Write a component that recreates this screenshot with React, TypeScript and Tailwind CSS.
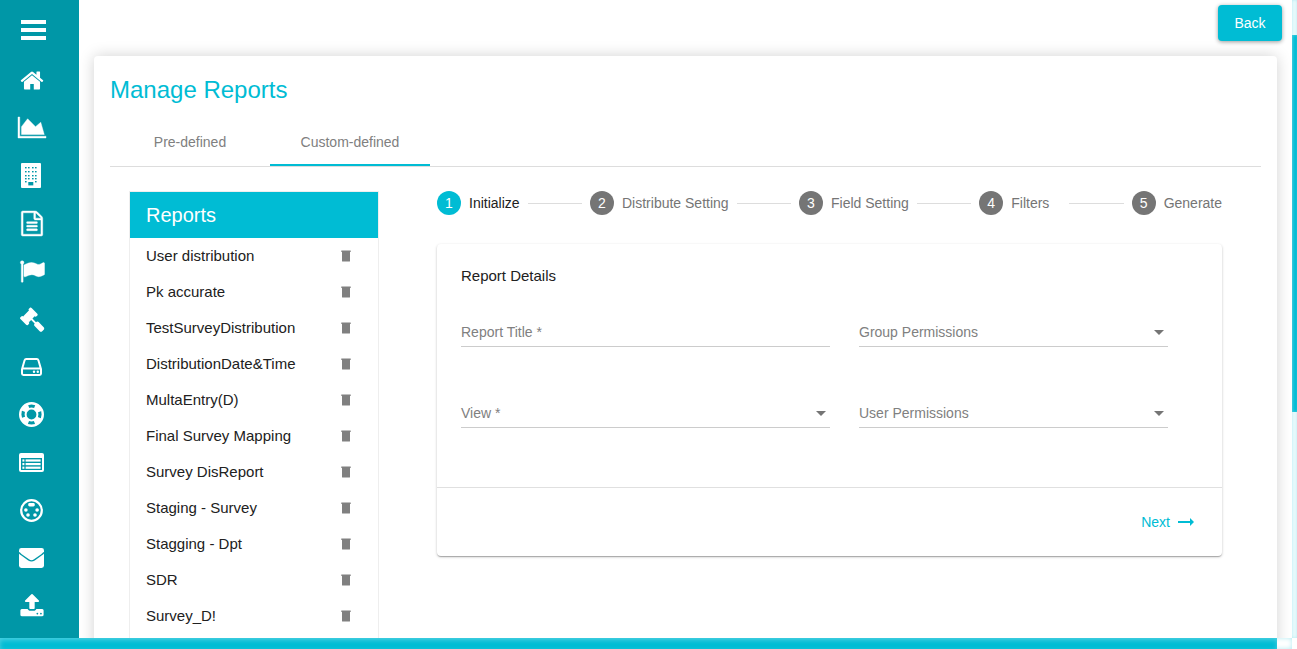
import { useState } from 'react';
import type { ReactNode } from 'react';

type NavItem = {
  label: string;
  icon: ReactNode;
};

type GlyphProps = {
  d: string;
  viewBox?: string;
  strokeWidth?: number;
};

type FieldProps = {
  id: string;
  label: string;
};

type SelectFieldProps = FieldProps & {
  options: string[];
};

const Glyph = ({ d, viewBox = '0 0 1792 1792', strokeWidth = 0 }: GlyphProps) => (
  <svg
    aria-hidden="true"
    className="h-[25px] w-7 overflow-visible"
    fill="currentColor"
    fillRule="evenodd"
    stroke="currentColor"
    strokeWidth={strokeWidth}
    viewBox={viewBox}
  >
    <path d={d} />
  </svg>
);

const BuildingIcon = () => (
  <svg aria-hidden="true" className="mr-0.5 h-[25px] w-5" viewBox="0 0 20 25">
    <rect fill="currentColor" height="25" rx="1" width="20" />
    <g className="fill-[#0097a7]">
      {[4, 8, 12, 15].map((y) =>
        [4, 7, 11, 14].map((x) => <rect height="1.4" key={`${x}-${y}`} width="1.6" x={x} y={y} />),
      )}
      <rect height="1.4" width="1.6" x="4" y="18" />
      <rect height="1.4" width="1.6" x="14" y="18" />
      <rect height="3.4" width="5" x="7.3" y="19" />
    </g>
  </svg>
);

const DriveIcon = () => (
  <svg aria-hidden="true" className="h-[18px] w-[21px]" viewBox="0 0 21 18">
    <path
      d="M1 11.2 3.6 2.2Q4 1 5.2 1h10.6q1.2 0 1.6 1.2L20 11.2V15.6q0 1.4-1.4 1.4H2.4Q1 17 1 15.6ZM1 10.4h19"
      fill="none"
      stroke="currentColor"
      strokeWidth="2"
    />
    <circle cx="13" cy="13.7" fill="currentColor" r="1.2" />
    <circle cx="16.8" cy="13.7" fill="currentColor" r="1.2" />
  </svg>
);

const LifeRingIcon = () => (
  <svg aria-hidden="true" className="h-[25px] w-[25px]" fill="none" stroke="currentColor" viewBox="0 0 25 25">
    <circle cx="12.5" cy="12.5" r="11.3" strokeWidth="2.4" />
    <circle cx="12.5" cy="12.5" r="5.9" strokeWidth="2" />
    <circle
      cx="12.5"
      cy="12.5"
      r="8.4"
      strokeDasharray="7.2 5.995"
      strokeDashoffset="3.6"
      strokeWidth="4.6"
      transform="rotate(45 12.5 12.5)"
    />
  </svg>
);

const ListIcon = () => (
  <svg aria-hidden="true" className="h-[19px] w-[25px]" viewBox="0 0 25 19">
    <rect fill="currentColor" height="19" rx="2" width="25" />
    <rect className="fill-[#0097a7]" height="12" width="21" x="2" y="5" />
    <g fill="currentColor">
      {[6.4, 10, 13.6].map((y) => (
        <g key={y}>
          <rect height="2.2" width="2" x="3.4" y={y} />
          <rect height="2.2" width="15" x="6.6" y={y} />
        </g>
      ))}
    </g>
  </svg>
);

const SocketIcon = () => (
  <svg aria-hidden="true" className="size-[23px]" fill="currentColor" viewBox="0 0 23 23">
    <circle cx="11.5" cy="11.5" fill="none" r="10.3" stroke="currentColor" strokeWidth="2.2" />
    <rect height="3.4" rx="1.4" width="6.6" x="8.2" y="4" />
    <circle cx="5.9" cy="11" r="1.8" />
    <circle cx="17.1" cy="11" r="1.8" />
    <circle cx="8" cy="16" r="1.8" />
    <circle cx="15" cy="16" r="1.8" />
  </svg>
);

const EnvelopeIcon = () => (
  <svg aria-hidden="true" className="h-5 w-[25px]" viewBox="0 0 25 20">
    <rect fill="currentColor" height="20" rx="2.4" width="25" />
    <path
      className="stroke-[#0097a7]"
      d="M0 4.4q.8 1.2 2.4 2.3l7.2 5.2q2.9 2 5.8 0l7.2-5.2q1.6-1.1 2.4-2.3"
      fill="none"
      strokeWidth="1.3"
    />
  </svg>
);

const TrashIcon = () => (
  <svg aria-hidden="true" className="h-3 w-2.5 fill-[#808080]" viewBox="0 0 10 12">
    <path d="M.3.5h9.4V2H9v9q0 .6-.6.6H1.6Q1 11.600 1 11V2H.3Z" />
  </svg>
);

const NAV: NavItem[] = [
  {
    label: 'Home',
    icon: (
      <Glyph d="M1472 992v480q0 26-19 45t-45 19h-384v-384h-256v384h-384q-26 0-45-19t-19-45v-480q0-1 .5-3t.5-3l575-474 575 474q1 2 1 6zm223-69l-62 74q-8 9-21 11h-3q-13 0-21-7l-692-577-692 577q-12 8-24 7-13-2-21-11l-62-74q-8-10-7-23.5t11-21.5l719-599q32-26 76-26t76 26l244 204v-195q0-14 9-23t23-9h192q14 0 23 9t9 23v408l219 182q10 8 11 21.5t-7 23.5z" />
    ),
  },
  {
    label: 'Analytics',
    icon: (
      <Glyph
        d="M2048 1536v128h-2048v-1536h128v1408h1920zm-384-1024l256 896h-1664v-576l448-576 576 576z"
        strokeWidth={30}
        viewBox="0 0 2048 1792"
      />
    ),
  },
  { label: 'Organization', icon: <BuildingIcon /> },
  {
    label: 'Documents',
    icon: (
      <Glyph
        d="M1596 380q28 28 48 76t20 88v1152q0 40-28 68t-68 28h-1344q-40 0-68-28t-28-68v-1600q0-40 28-68t68-28h896q40 0 88 20t76 48zm-444-244v376h376q-10-29-22-41l-313-313q-12-12-41-22zm384 1528v-1024h-416q-40 0-68-28t-28-68v-416h-768v1536h1280zM512 800q0-14 9-23t23-9h704q14 0 23 9t9 23v64q0 14-9 23t-23 9h-704q-14 0-23-9t-9-23zm0 256q0-14 9-23t23-9h704q14 0 23 9t9 23v64q0 14-9 23t-23 9h-704q-14 0-23-9t-9-23zm0 256q0-14 9-23t23-9h704q14 0 23 9t9 23v64q0 14-9 23t-23 9h-704q-14 0-23-9t-9-23z"
        strokeWidth={30}
      />
    ),
  },
  {
    label: 'Campaigns',
    icon: (
      <Glyph
        d="M320 256q0 72-64 110v1266q0 13-9.5 22.5t-22.5 9.5h-64q-13 0-22.5-9.5t-9.5-22.5v-1266q-64-38-64-110 0-53 37.5-90.5t90.5-37.5 90.5 37.5 37.5 90.5zm1472 64v763q0 25-12.5 38.5t-39.5 27.5q-215 116-369 116-61 0-123.5-22t-108.5-48-115.5-48-142.5-22q-192 0-464 146-17 9-33 9-26 0-45-19t-19-45v-742q0-32 31-55 21-14 79-43 236-120 421-120 107 0 200 29t219 88q38 19 88 19 54 0 117.5-21t110-47 88-47 54.5-21q26 0 45 19t19 45z"
        strokeWidth={30}
      />
    ),
  },
  {
    label: 'Rules',
    icon: (
      <Glyph d="M1771 1536q0 53-37 90l-107 108q-39 37-91 37-53 0-90-37l-363-364q-38-36-38-90 0-53 43-96l-256-256-126 126q-14 14-34 14t-34-14q2 2 12.5 12t12.5 13 10 11.5 10 13.5 6 13.5 5.5 16.5 1.5 18q0 38-28 68-3 3-16.5 18t-19 20.5-18.5 16.5-22 15.5-22 9-26 4.5q-40 0-68-28l-408-408q-28-28-28-68 0-13 4.5-26t9-22 15.5-22 16.5-18.5 20.5-19 18-16.5q30-28 68-28 10 0 18 1.5t16.5 5.5 13.5 6 13.5 10 11.5 10 13 12.5 12 12.5q-14-14-14-34t14-34l348-348q14-14 34-14t34 14q-2-2-12.5-12t-12.5-13-10-11.5-10-13.5-6-13.5-5.5-16.5-1.5-18q0-38 28-68 3-3 16.5-18t19-20.5 18.5-16.5 22-15.5 22-9 26-4.5q40 0 68 28l408 408q28 28 28 68 0 13-4.5 26t-9 22-15.5 22-16.5 18.5-20.5 19-18 16.5q-30 28-68 28-10 0-18-1.5t-16.5-5.5-13.5-6-13.5-10-11.5-10-13-12.5-12-12.5q14 14 14 34t-14 34l-126 126 256 256q43-43 96-43 52 0 91 37l363 363q37 39 37 91z" />
    ),
  },
  { label: 'Storage', icon: <DriveIcon /> },
  { label: 'Support', icon: <LifeRingIcon /> },
  { label: 'Surveys', icon: <ListIcon /> },
  { label: 'Integrations', icon: <SocketIcon /> },
  { label: 'Messages', icon: <EnvelopeIcon /> },
  {
    label: 'Upload',
    icon: (
      <Glyph d="M1344 1472q0-26-19-45t-45-19-45 19-19 45 19 45 45 19 45-19 19-45zm256 0q0-26-19-45t-45-19-45 19-19 45 19 45 45 19 45-19 19-45zm128-224v320q0 40-28 68t-68 28h-1472q-40 0-68-28t-28-68v-320q0-40 28-68t68-28h427q21 56 70.5 92t110.5 36h256q61 0 110.5-36t70.5-92h427q40 0 68 28t28 68zm-325-648q-17 40-59 40h-256v448q0 26-19 45t-45 19h-256q-26 0-45-19t-19-45v-448h-256q-42 0-59-40-17-39 14-69l448-448q18-19 45-19t45 19l448 448q31 30 14 69z" />
    ),
  },
];

const TABS = ['Pre-defined', 'Custom-defined'];

const REPORTS = [
  'User distribution',
  'Pk accurate',
  'TestSurveyDistribution',
  'DistributionDate&Time',
  'MultaEntry(D)',
  'Final Survey Mapping',
  'Survey DisReport',
  'Staging - Survey',
  'Stagging - Dpt',
  'SDR',
  'Survey_D!',
];

const STEPS = ['Initialize', 'Distribute Setting', 'Field Setting', 'Filters', 'Generate'];

const Sidebar = () => (
  <aside className="flex w-[79px] shrink-0 flex-col bg-[#0097a7] pb-5 text-white">
    <button aria-label="Toggle menu" className="flex h-[60px] w-[66px] shrink-0 items-center justify-center" type="button">
      <svg aria-hidden="true" className="h-5 w-[25px]" fill="currentColor" viewBox="0 0 25 20">
        <path d="M0 0h25v4H0zM0 8h25v4H0zM0 16h25v4H0z" />
      </svg>
    </button>
    <nav className="flex w-[63px] flex-1 flex-col justify-between pt-2">
      {NAV.map(({ label, icon }) => (
        <a aria-label={label} className="flex h-6 items-center justify-center" href="#" key={label}>
          {icon}
        </a>
      ))}
    </nav>
  </aside>
);

const ReportList = () => (
  <section className="w-[250px] shrink-0 border border-[#eeeeee] pb-4">
    <h2 className="bg-[#00bcd4] px-4 text-xl leading-[46px] text-white">Reports</h2>
    <ul>
      {REPORTS.map((name) => (
        <li className="flex h-9 items-center justify-between pr-[27px] pl-4 text-[15px]" key={name}>
          <span>{name}</span>
          <button aria-label={`Delete ${name}`} type="button">
            <TrashIcon />
          </button>
        </li>
      ))}
    </ul>
  </section>
);

const Stepper = ({ active }: { active: number }) => (
  <ol className="flex items-center">
    {STEPS.map((step, index) => (
      <li className={index > 0 ? 'flex flex-auto items-center' : 'flex items-center'} key={step}>
        {index > 0 && <span className="mx-2 h-px flex-1 bg-[#dddddd]" />}
        <button
          className={index === active ? 'flex items-center gap-2' : 'flex items-center gap-2 text-[#757575]'}
          type="button"
        >
          <span
            className={
              index === active
                ? 'flex size-6 items-center justify-center rounded-full bg-[#00bcd4] text-white'
                : 'flex size-6 items-center justify-center rounded-full bg-[#757575] text-white'
            }
          >
            {index + 1}
          </span>
          <span className="min-w-[50px] text-left">{step}</span>
        </button>
      </li>
    ))}
  </ol>
);

const TextField = ({ id, label }: FieldProps) => (
  <div className="relative border-b border-[#cccccc]">
    <input className="peer block h-7 w-full bg-transparent outline-none" id={id} placeholder=" " type="text" />
    <label
      className="pointer-events-none absolute top-0 left-0 leading-7 text-[#808080] peer-focus:hidden peer-[:not(:placeholder-shown)]:hidden"
      htmlFor={id}
    >
      {label}
    </label>
  </div>
);

const SelectField = ({ id, label, options }: SelectFieldProps) => {
  const [value, setValue] = useState('');

  return (
    <div className="relative border-b border-[#cccccc]">
      <select
        className="block h-7 w-full appearance-none bg-transparent outline-none"
        id={id}
        onChange={(e) => setValue(e.target.value)}
        value={value}
      >
        <option value="" />
        {options.map((option) => (
          <option key={option}>{option}</option>
        ))}
      </select>
      <label
        className={value ? 'sr-only' : 'pointer-events-none absolute top-0 left-0 leading-7 text-[#808080]'}
        htmlFor={id}
      >
        {label}
      </label>
      <svg
        aria-hidden="true"
        className="pointer-events-none absolute top-3 right-1 h-[5px] w-2.5 fill-[#757575]"
        viewBox="0 0 10 5"
      >
        <path d="M0 0h10L5 5z" />
      </svg>
    </div>
  );
};

const ReportForm = () => (
  <form className="mt-[29px] rounded-sm bg-white shadow-[0_1px_3px_rgba(0,0,0,0.2),0_1px_1px_rgba(0,0,0,0.14),0_2px_1px_-1px_rgba(0,0,0,0.12)]">
    <div className="px-6 pt-5 pb-[59px]">
      <h3 className="text-[15px] leading-6">Report Details</h3>
      <div className="mt-[30px] mr-[30px] grid grid-cols-[369fr_309fr] gap-x-[29px] gap-y-[52px]">
        <TextField id="report-title" label="Report Title *" />
        <SelectField id="group-permissions" label="Group Permissions" options={['Administrators', 'Managers']} />
        <SelectField id="view" label="View *" options={['Table', 'Chart']} />
        <SelectField id="user-permissions" label="User Permissions" options={['Read', 'Write']} />
      </div>
    </div>
    <div className="flex h-[69px] items-center justify-end border-t border-[#e0e0e0] px-7">
      <button className="flex items-center gap-2 text-[#00bcd4]" type="button">
        Next
        <svg aria-hidden="true" className="h-2 w-4" viewBox="0 0 16 8">
          <path d="M0 3h12V0l4 4-4 4V5H0z" fill="currentColor" />
        </svg>
      </button>
    </div>
  </form>
);

const App = () => {
  const [tab, setTab] = useState(TABS[1]);

  return (
    <div className="grid h-screen grid-cols-[1fr_5px] grid-rows-[1fr_11px] overflow-hidden bg-white font-['Liberation_Sans',Arial,sans-serif] text-sm text-[#212121]">
      <div className="flex min-h-0 min-w-0 overflow-hidden">
        <Sidebar />
        <main className="flex min-w-0 flex-1 flex-col px-[15px]">
          <div className="-mr-[5px] flex h-14 shrink-0 justify-end pt-[5px]">
            <button
              className="h-9 w-16 rounded bg-[#00bcd4] text-white shadow-[0_1px_4px_rgba(0,0,0,0.4)]"
              type="button"
            >
              Back
            </button>
          </div>
          <div className="flex-1 rounded-t bg-white p-4 shadow-[0_0_15px_rgba(0,0,0,0.18)]">
            <h1 className="text-2xl leading-9 text-[#00bcd4]">Manage Reports</h1>
            <div className="mt-[10px] flex border-b border-[#dddddd]" role="tablist">
              {TABS.map((name) => (
                <button
                  aria-selected={tab === name}
                  className={
                    tab === name
                      ? 'h-12 w-40 border-b-2 border-[#00bcd4] pt-0.5 text-[#808080]'
                      : 'h-12 w-40 border-b-2 border-transparent pt-0.5 text-[#808080]'
                  }
                  key={name}
                  onClick={() => setTab(name)}
                  role="tab"
                  type="button"
                >
                  {name}
                </button>
              ))}
            </div>
            <div className="flex gap-[58px] pt-6 pr-[39px] pl-[19px]">
              <ReportList />
              <div className="min-w-0 flex-1">
                <Stepper active={0} />
                <ReportForm />
              </div>
            </div>
          </div>
        </main>
      </div>
      {/* Scrollbars */}
      <div className="flex flex-col bg-[#e9fafc] pt-[35px] shadow-[inset_0_0_3px_#b2ebf2]">
        <div className="h-5/8 bg-[#00bcd4] shadow-[inset_1px_0_3px_#4dd0e1]" />
      </div>
      <div className="flex bg-white shadow-[inset_0_0_5px_#b2ebf2]">
        <div className="mr-[15px] flex-1 bg-[#00bcd4] shadow-[inset_0_2px_5px_#4dd0e1]" />
      </div>
      <div className="bg-white" />
    </div>
  );
};

export default App;
